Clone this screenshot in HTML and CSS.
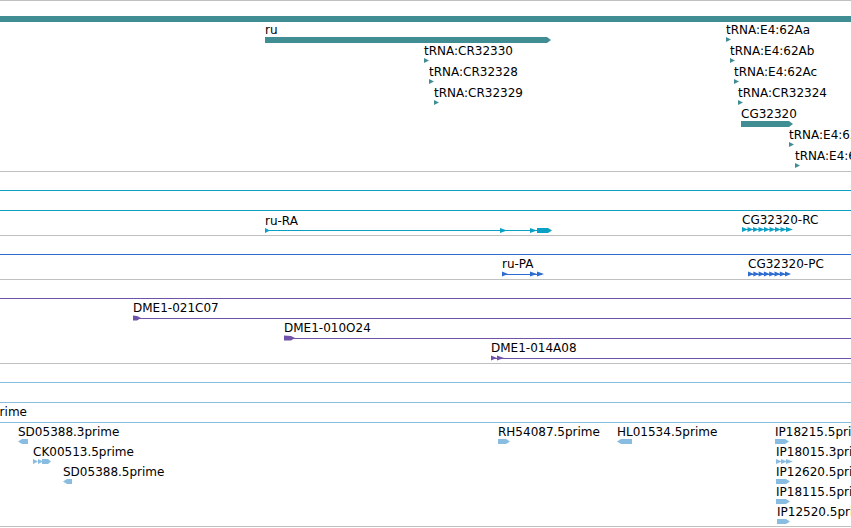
FILE: index.html
```html
<!DOCTYPE html>
<html lang="en">
<head>
    <meta charset="UTF-8">
    <title>Detailed view</title>
    <link rel="stylesheet" href="styles.css">
</head>
<body>
    <div class="panel">
        <!-- genes -->
        <div class="track track-gene">
            <div class="span-bar teal"></div>
            <div class="feat" style="left:265px;top:22px"><div class="label">ru</div><div class="bar arrow-r teal" style="width:286px"></div></div>
            <div class="feat" style="left:424px;top:43px"><div class="label">tRNA:CR32330</div><div class="tri teal"></div></div>
            <div class="feat" style="left:429px;top:64px"><div class="label">tRNA:CR32328</div><div class="tri teal"></div></div>
            <div class="feat" style="left:434px;top:85px"><div class="label">tRNA:CR32329</div><div class="tri teal"></div></div>
            <div class="feat" style="left:726px;top:22px"><div class="label">tRNA:E4:62Aa</div><div class="tri teal"></div></div>
            <div class="feat" style="left:730px;top:43px"><div class="label">tRNA:E4:62Ab</div><div class="tri teal"></div></div>
            <div class="feat" style="left:734px;top:64px"><div class="label">tRNA:E4:62Ac</div><div class="tri teal"></div></div>
            <div class="feat" style="left:738px;top:85px"><div class="label">tRNA:CR32324</div><div class="tri teal"></div></div>
            <div class="feat" style="left:741px;top:106px"><div class="label">CG32320</div><div class="bar arrow-r teal" style="width:52px"></div></div>
            <div class="feat" style="left:789px;top:127px"><div class="label">tRNA:E4:62Ad</div><div class="tri teal"></div></div>
            <div class="feat" style="left:795px;top:148px"><div class="label">tRNA:E4:62Ae</div><div class="tri teal"></div></div>
        </div>

        <!-- transcripts -->
        <div class="track track-rna">
            <div class="span cyan" style="top:18px"></div>
            <div class="span cyan" style="top:38px"></div>
            <div class="feat" style="left:265px;top:42px">
                <div class="label">ru-RA</div>
                <svg class="model cyan" width="287" height="6">
                    <rect x="0" y="2" width="284" height="1"/>
                    <polygon points="0,0 5,2.5 0,5"/>
                    <polygon points="235,0 242,2.5 235,5"/>
                    <polygon points="265,0 272,2.5 265,5"/>
                    <polygon points="272,0 283,0 287,2.5 283,5 272,5"/>
                </svg>
            </div>
            <div class="feat" style="left:742px;top:41px">
                <div class="label">CG32320-RC</div>
                <svg class="model cyan" width="52" height="6">
                    <rect x="0" y="2" width="50" height="1"/>
                    <polygon points="0,0 6,2.5 0,5"/>
                    <polygon points="5.5,0 11.5,2.5 5.5,5"/>
                    <polygon points="11,0 17,2.5 11,5"/>
                    <polygon points="16.5,0 22.5,2.5 16.5,5"/>
                    <polygon points="22,0 28,2.5 22,5"/>
                    <polygon points="27.5,0 33.5,2.5 27.5,5"/>
                    <polygon points="33,0 39,2.5 33,5"/>
                    <polygon points="38.5,0 44.5,2.5 38.5,5"/>
                    <polygon points="44,0 51,2.5 44,5"/>
                </svg>
            </div>
        </div>

        <!-- proteins -->
        <div class="track track-pep">
            <div class="span blue" style="top:18px"></div>
            <div class="feat" style="left:502px;top:21px">
                <div class="label">ru-PA</div>
                <svg class="model blue" width="43" height="6">
                    <rect x="0" y="3" width="40" height="1"/>
                    <polygon points="0,0.5 6,3 0,5.5"/>
                    <polygon points="28,0.5 35,3 28,5.5"/>
                    <polygon points="35,0.5 42,3 35,5.5"/>
                </svg>
            </div>
            <div class="feat" style="left:748px;top:21px">
                <div class="label">CG32320-PC</div>
                <svg class="model blue" width="43" height="6">
                    <rect x="0" y="3" width="41" height="1"/>
                    <polygon points="0,0.5 6,3 0,5.5"/>
                    <polygon points="5.3,0.5 11.3,3 5.3,5.5"/>
                    <polygon points="10.6,0.5 16.6,3 10.6,5.5"/>
                    <polygon points="15.9,0.5 21.9,3 15.9,5.5"/>
                    <polygon points="21.2,0.5 27.2,3 21.2,5.5"/>
                    <polygon points="26.5,0.5 32.5,3 26.5,5.5"/>
                    <polygon points="31.8,0.5 37.8,3 31.8,5.5"/>
                    <polygon points="37,0.5 43,3 37,5.5"/>
                </svg>
            </div>
        </div>

        <!-- clones -->
        <div class="track track-clone">
            <div class="span purple" style="top:18px"></div>
            <div class="feat" style="left:133px;top:21px">
                <div class="label">DME1-021C07</div>
                <svg class="model purple" width="720" height="6">
                    <rect x="0" y="3" width="720" height="1"/>
                    <polygon points="0,0.5 4,1 8,3 4,5.5 0,5.5"/>
                </svg>
            </div>
            <div class="feat" style="left:284px;top:41px">
                <div class="label">DME1-010O24</div>
                <svg class="model purple" width="570" height="6">
                    <rect x="0" y="3" width="570" height="1"/>
                    <polygon points="0,0.5 7,1 11,3 7,5.5 0,5.5"/>
                </svg>
            </div>
            <div class="feat" style="left:491px;top:61px">
                <div class="label">DME1-014A08</div>
                <svg class="model purple" width="362" height="6">
                    <rect x="0" y="3" width="362" height="1"/>
                    <polygon points="0,0.5 6,3 0,5.5"/>
                    <polygon points="6,0.5 13,3 6,5.5"/>
                </svg>
            </div>
        </div>

        <!-- ESTs -->
        <div class="track track-est">
            <div class="span sky" style="top:18px"></div>
            <div class="span sky" style="top:38px"></div>
            <div class="span sky" style="top:58px"></div>
            <div class="feat" style="left:-8px;top:41px"><div class="label">prime</div></div>
            <div class="feat" style="left:18px;top:61px"><div class="label">SD05388.3prime</div><div class="est arrow-l sky" style="width:10px"></div></div>
            <div class="feat" style="left:33px;top:81px">
                <div class="label">CK00513.5prime</div>
                <svg class="model sky" width="18" height="5">
                    <polygon points="0,0 5,2.5 0,5"/>
                    <polygon points="5,0 10,2.5 5,5"/>
                    <polygon points="9,0 15,0 18,2.5 15,5 9,5"/>
                </svg>
            </div>
            <div class="feat" style="left:63px;top:101px"><div class="label">SD05388.5prime</div><div class="est arrow-l sky" style="width:9px"></div></div>
            <div class="feat" style="left:498px;top:61px"><div class="label">RH54087.5prime</div><div class="est arrow-r sky" style="width:12px"></div></div>
            <div class="feat" style="left:617px;top:61px"><div class="label">HL01534.5prime</div><div class="est arrow-l sky" style="width:15px"></div></div>
            <div class="feat" style="left:775px;top:61px"><div class="label">IP18215.5prime</div><div class="est arrow-r sky" style="width:14px"></div></div>
            <div class="feat" style="left:776px;top:81px">
                <div class="label">IP18015.3prime</div>
                <svg class="model sky" width="17" height="5">
                    <polygon points="0,0 6,2.5 0,5"/>
                    <polygon points="5,0 11,2.5 5,5"/>
                    <polygon points="10,0 17,2.5 10,5"/>
                </svg>
            </div>
            <div class="feat" style="left:776px;top:101px"><div class="label">IP12620.5prime</div><div class="est arrow-r sky" style="width:14px"></div></div>
            <div class="feat" style="left:776px;top:121px"><div class="label">IP18115.5prime</div><div class="est arrow-r sky" style="width:14px"></div></div>
            <div class="feat" style="left:777px;top:141px"><div class="label">IP12520.5prime</div><div class="est arrow-r sky" style="width:13px"></div></div>
        </div>
        <div class="track-end"></div>
    </div>
</body>
</html>
```

FILE: styles.css
```css
body {
    margin: 0;
    background: #fff;
    font-family: "DejaVu Sans", sans-serif;
    font-size: 12px;
    color: #000;
}
.panel {
    width: 851px;
    height: 528px;
    overflow: hidden;
}
.track {
    position: relative;
    border-top: 1px solid #c0c0c0;
    overflow: hidden;
}
.track-gene {
    height: 170px;
}
.track-rna {
    height: 63px;
}
.track-pep {
    height: 43px;
}
.track-clone {
    height: 83px;
}
.track-est {
    height: 162px;
}
.track-end {
    border-top: 1px solid #c0c0c0;
    height: 1px;
}

/* colours */
.teal {
    color: #408e94;
}
.cyan {
    color: #0ca0c4;
}
.blue {
    color: #2e6cd0;
}
.purple {
    color: #7052a8;
}
.sky {
    color: #88bce0;
}

/* full-width rows */
.span {
    position: absolute;
    left: 0;
    right: 0;
    height: 1px;
    background: currentColor;
}
.span-bar {
    position: absolute;
    left: 0;
    right: 0;
    top: 15px;
    height: 6px;
    background: currentColor;
}

/* features */
.feat {
    position: absolute;
    white-space: nowrap;
}
.label {
    height: 14px;
    line-height: 14px;
}
.model {
    display: block;
    fill: currentColor;
}
.bar {
    height: 6px;
    background: currentColor;
}
.est {
    height: 5px;
    background: currentColor;
}
.tri {
    width: 5px;
    height: 5px;
    background: currentColor;
    clip-path: polygon(0 0, 100% 50%, 0 100%);
}
.arrow-r {
    clip-path: polygon(0 0, calc(100% - 4px) 0, 100% 50%, calc(100% - 4px) 100%, 0 100%);
}
.arrow-l {
    clip-path: polygon(4px 0, 100% 0, 100% 100%, 4px 100%, 0 50%);
}
```
